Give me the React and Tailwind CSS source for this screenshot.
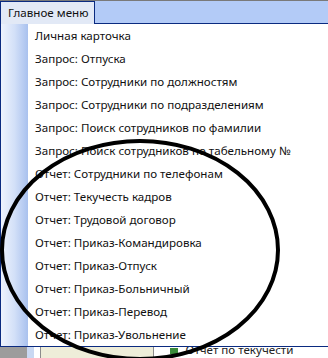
import React from 'react';

const items = [
  'Личная карточка',
  'Запрос: Отпуска',
  'Запрос: Сотрудники по должностям',
  'Запрос: Сотрудники по подразделениям',
  'Запрос: Поиск сотрудников по фамилии',
  'Запрос: Поиск сотрудников по табельному №',
  'Отчет: Сотрудники по телефонам',
  'Отчет: Текучесть кадров',
  'Отчет: Трудовой договор',
  'Отчет: Приказ-Командировка',
  'Отчет: Приказ-Отпуск',
  'Отчет: Приказ-Больничный',
  'Отчет: Приказ-Перевод',
  'Отчет: Приказ-Увольнение',
];

const App = () => {
  return (
    <div
      className="relative w-[328px] h-[358px] overflow-hidden bg-white text-[11.6px] text-[#111]"
      style={{ fontFamily: '"Noto Sans", "DejaVu Sans", sans-serif' }}
    >
      {/* Menu bar */}
      <div className="h-[24px] border-t border-[#7a7a7a] bg-[#b3cbf7] flex">
        <div className="w-[95px] h-[23px] border border-b-0 border-[#0a2a80] bg-[#e2e9f6] flex items-center pl-[7px] leading-none">
          Главное меню
        </div>
        <div className="flex-1 self-end border-b border-[#0a2a80]"></div>
      </div>

      {/* Dropdown */}
      <div className="flex border-l border-b border-[#0a2a80] bg-white">
        <div className="w-[27px] bg-gradient-to-r from-[#eef3fd] via-[#d3e0f8] to-[#a9c1ee]"></div>
        <ul className="flex-1 pl-[7px]">
          {items.map((item) => (
            <li key={item} className="h-[23px] flex items-center whitespace-nowrap">
              {item}
            </li>
          ))}
        </ul>
      </div>

      {/* What lies behind the menu */}
      <div className="flex h-[12px]">
        <div className="w-[27px] bg-[#9c9c9c]"></div>
        <div className="w-[7px] bg-[#c9d8f2]"></div>
        <div className="w-[6px] bg-white"></div>
        <div className="w-[114px] border-x border-[#8c8c8c] bg-[#eeedd9]"></div>
        <div className="flex-1 bg-white flex items-start pl-[16px] gap-[8px] overflow-hidden">
          <div className="w-[8px] h-[6px] mt-[1px] bg-[#3a8a3a]"></div>
          <span className="leading-none -mt-[3px] text-[#222]">Отчет по текучести кадров</span>
        </div>
      </div>

      {/* Hand-drawn oval over the list */}
      <svg className="absolute left-0 top-0 pointer-events-none" width="328" height="358" viewBox="0 0 328 358">
        <ellipse cx="140" cy="250" rx="138" ry="109" fill="none" stroke="#000" strokeWidth="4" />
      </svg>
    </div>
  );
};

export default App;
